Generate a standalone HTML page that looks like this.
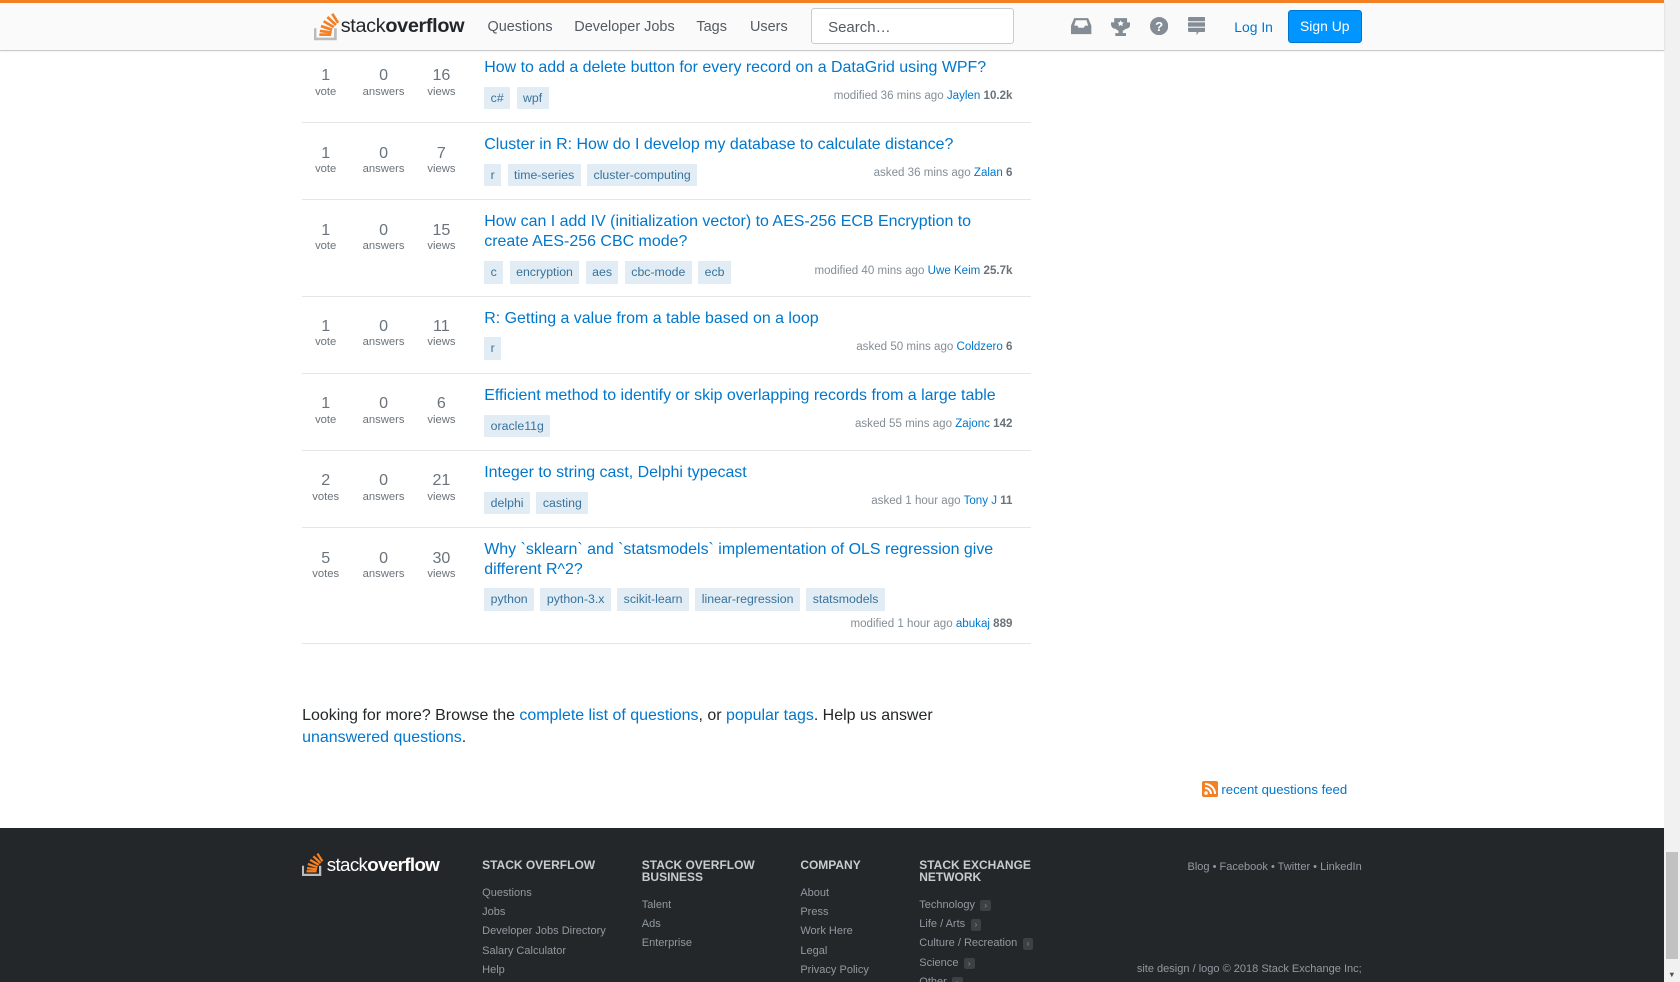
<!DOCTYPE html>
<html><head><meta charset="utf-8">
<style>
*{box-sizing:border-box;margin:0;padding:0}
html,body{width:1680px;height:982px;overflow:hidden;background:#fff}
#w{zoom:1.0714;width:1568px;height:917px;position:relative;overflow:hidden;font-family:Arial,"Liberation Sans",sans-serif;color:#242729}
a{color:#0077cc;text-decoration:none}
.hdr{position:absolute;left:0;top:0;width:1553px;height:47px;background:#fafafb;border-top:3px solid #f48024;box-shadow:0 1px 2px rgba(12,13,14,.15),0 1px 0 #ddd;z-index:5}
.nav{position:absolute;top:15px;font-size:13.5px;color:#535a60}
.search{position:absolute;left:757px;top:5px;width:189px;height:33px;border:1px solid #c8ccd0;border-radius:3px;background:#fff;font-size:14px;color:#535a60;padding:9px 15px}
.ic{position:absolute;top:13px}
.login{position:absolute;left:1152px;top:15px;font-size:13px;color:#0077cc}
.signup{position:absolute;left:1202px;top:7px;width:69px;height:30px;background:#0095ff;border:1px solid #07c;border-radius:3px;color:#fff;font-size:13px;text-align:center;line-height:28px}
.q{position:absolute;left:282px;width:680px;border-bottom:1px solid #e4e6e8}
.st{position:absolute;top:0;width:56px;text-align:center;color:#6a737c}
.st b{display:block;font-weight:normal;font-size:15px;line-height:18px}
.st i{display:block;font-style:normal;font-size:10.5px;line-height:13px}
.t{position:absolute;left:170px;width:490px;font-size:14.9px;line-height:19px;color:#0077cc}
.tags{position:absolute;left:170px;font-size:0}
.tag{display:inline-block;background:#e1ecf4;color:#39739d;font-size:11.5px;height:21px;line-height:21px;padding:0 6px;margin-right:6px}
.meta{position:absolute;right:17px;font-size:10.8px;color:#848d95;white-space:nowrap}
.meta b{color:#6a737c}
.sb{position:absolute;left:1553px;top:0;width:15px;height:917px;background:#f1f1f1}
.ft{position:absolute;left:0;top:773px;width:1553px;height:144px;background:#242729}
.fh{position:absolute;top:30px;font-size:11.2px;font-weight:bold;color:#c8ccd0;line-height:11px}
.fl{position:absolute;font-size:10.3px;color:#9199a1;line-height:18px}
.ch{display:inline-block;background:#3c4146;color:#848d95;font-size:8px;width:10px;height:11px;line-height:11px;text-align:center;margin-left:5px;border-radius:2px}
</style></head><body><div id="w">

<div class="q" style="top:47px;height:68px">
 <div class="st" style="left:-6px;top:15px"><b>1</b><i>vote</i></div>
 <div class="st" style="left:48px;top:15px"><b>0</b><i>answers</i></div>
 <div class="st" style="left:102px;top:15px"><b>16</b><i>views</i></div>
 <a class="t" style="top:7px">How to add a delete button for every record on a DataGrid using WPF?</a>
 <div class="tags" style="top:34px"><span class="tag">c#</span><span class="tag">wpf</span></div>
 <div class="meta" style="top:37px">modified 36 mins ago <a>Jaylen</a> <b>10.2k</b></div>
</div>
<div class="q" style="top:115px;height:72px">
 <div class="st" style="left:-6px;top:19px"><b>1</b><i>vote</i></div>
 <div class="st" style="left:48px;top:19px"><b>0</b><i>answers</i></div>
 <div class="st" style="left:102px;top:19px"><b>7</b><i>views</i></div>
 <a class="t" style="top:11px">Cluster in R: How do I develop my database to calculate distance?</a>
 <div class="tags" style="top:38px"><span class="tag">r</span><span class="tag">time-series</span><span class="tag">cluster-computing</span></div>
 <div class="meta" style="top:41px">asked 36 mins ago <a>Zalan</a> <b>6</b></div>
</div>
<div class="q" style="top:187px;height:90px">
 <div class="st" style="left:-6px;top:19px"><b>1</b><i>vote</i></div>
 <div class="st" style="left:48px;top:19px"><b>0</b><i>answers</i></div>
 <div class="st" style="left:102px;top:19px"><b>15</b><i>views</i></div>
 <a class="t" style="top:11px;width:480px">How can I add IV (initialization vector) to AES-256 ECB Encryption to create AES-256 CBC mode?</a>
 <div class="tags" style="top:57px"><span class="tag">c</span><span class="tag">encryption</span><span class="tag">aes</span><span class="tag">cbc-mode</span><span class="tag">ecb</span></div>
 <div class="meta" style="top:60px">modified 40 mins ago <a>Uwe Keim</a> <b>25.7k</b></div>
</div>
<div class="q" style="top:277px;height:72px">
 <div class="st" style="left:-6px;top:19px"><b>1</b><i>vote</i></div>
 <div class="st" style="left:48px;top:19px"><b>0</b><i>answers</i></div>
 <div class="st" style="left:102px;top:19px"><b>11</b><i>views</i></div>
 <a class="t" style="top:11px">R: Getting a value from a table based on a loop</a>
 <div class="tags" style="top:38px"><span class="tag">r</span></div>
 <div class="meta" style="top:41px">asked 50 mins ago <a>Coldzero</a> <b>6</b></div>
</div>
<div class="q" style="top:349px;height:72px">
 <div class="st" style="left:-6px;top:19px"><b>1</b><i>vote</i></div>
 <div class="st" style="left:48px;top:19px"><b>0</b><i>answers</i></div>
 <div class="st" style="left:102px;top:19px"><b>6</b><i>views</i></div>
 <a class="t" style="top:11px">Efficient method to identify or skip overlapping records from a large table</a>
 <div class="tags" style="top:38px"><span class="tag">oracle11g</span></div>
 <div class="meta" style="top:41px">asked 55 mins ago <a>Zajonc</a> <b>142</b></div>
</div>
<div class="q" style="top:421px;height:72px">
 <div class="st" style="left:-6px;top:19px"><b>2</b><i>votes</i></div>
 <div class="st" style="left:48px;top:19px"><b>0</b><i>answers</i></div>
 <div class="st" style="left:102px;top:19px"><b>21</b><i>views</i></div>
 <a class="t" style="top:11px">Integer to string cast, Delphi typecast</a>
 <div class="tags" style="top:38px"><span class="tag">delphi</span><span class="tag">casting</span></div>
 <div class="meta" style="top:41px">asked 1 hour ago <a>Tony J</a> <b>11</b></div>
</div>
<div class="q" style="top:493px;height:108px">
 <div class="st" style="left:-6px;top:19px"><b>5</b><i>votes</i></div>
 <div class="st" style="left:48px;top:19px"><b>0</b><i>answers</i></div>
 <div class="st" style="left:102px;top:19px"><b>30</b><i>views</i></div>
 <a class="t" style="top:11px;width:500px">Why `sklearn` and `statsmodels` implementation of OLS regression give different R^2?</a>
 <div class="tags" style="top:56px"><span class="tag">python</span><span class="tag">python-3.x</span><span class="tag">scikit-learn</span><span class="tag">linear-regression</span><span class="tag">statsmodels</span></div>
 <div class="meta" style="top:84px">modified 1 hour ago <a>abukaj</a> <b>889</b></div>
</div>

<div style="position:absolute;left:282px;top:658px;width:620px;font-size:14.9px;line-height:21px;color:#242729">Looking for more? Browse the <a>complete list of questions</a>, or <a>popular tags</a>. Help us answer <a>unanswered questions</a>.</div>

<div style="position:absolute;left:1122px;top:729px;font-size:12.3px;color:#0077cc">
<svg width="15" height="15" viewBox="0 0 16 16" style="vertical-align:-3px;margin-right:3px"><rect width="16" height="16" rx="2" fill="#f48024"/><circle cx="4" cy="12" r="1.8" fill="#fff"/><path d="M3 7a6 6 0 0 1 6 6M3 3a10 10 0 0 1 10 10" stroke="#fff" stroke-width="2" fill="none"/></svg>recent questions feed</div>

<div class="hdr">
 <svg style="position:absolute;left:293px;top:7px" width="26" height="30" viewBox="0 0 26 30"><path d="M1 17v10h19V17" stroke="#bcbbbb" stroke-width="2.5" fill="none"/><g stroke="#f48024" stroke-width="2.5"><path d="M5 23h11"/><path d="M5.5 19.5l11 1.5"/><path d="M6.5 15l10.5 3.5"/><path d="M9 10.5l9.5 5.5"/><path d="M12.5 6.5l8 7.5"/><path d="M17 3.5l5.5 8.5"/></g></svg>
 <div style="position:absolute;left:318px;top:11px;font-size:18.5px;color:#242729;letter-spacing:-0.3px">stack<b>overflow</b></div>
 <div class="nav" style="left:455px">Questions</div>
 <div class="nav" style="left:536px">Developer Jobs</div>
 <div class="nav" style="left:650px">Tags</div>
 <div class="nav" style="left:700px">Users</div>
 <div class="search">Search…</div>
 <svg class="ic" style="left:1000px" width="19" height="17" viewBox="0 0 19 17"><path d="M3 1h13l3 7v8H0V8z" fill="#848d95"/><path d="M3 8h3l1 2h5l1-2h3L14.5 3h-10z" fill="#fafafb"/></svg>
 <svg class="ic" style="left:1037px" width="18" height="18" viewBox="0 0 18 18"><path d="M3 1h12v4h3v2a4 4 0 0 1-4 4l-3 2v2h3v3H4v-3h3v-2l-3-2a4 4 0 0 1-4-4V5h3z" fill="#848d95"/><path d="M9 3l1 2h2l-1.5 1.5.5 2-2-1-2 1 .5-2L6 5h2z" fill="#fff"/></svg>
 <svg class="ic" style="left:1073px" width="17" height="17" viewBox="0 0 18 18"><circle cx="9" cy="9" r="9" fill="#848d95"/><text x="9" y="14" font-size="13" font-weight="bold" text-anchor="middle" fill="#fff" font-family="Arial">?</text></svg>
 <svg class="ic" style="left:1109px" width="16" height="19" viewBox="0 0 16 19"><rect y="0" width="16" height="4" rx="1" fill="#848d95"/><rect y="5" width="16" height="4" fill="#848d95"/><path d="M0 10h16v3a1 1 0 0 1-1 1H10l-2 3v-3H1a1 1 0 0 1-1-1z" fill="#848d95"/></svg>
 <div class="login">Log In</div>
 <div class="signup">Sign Up</div>
</div>

<div class="ft">
 <svg style="position:absolute;left:282px;top:19px" width="22" height="28" viewBox="0 0 26 30"><path d="M1 17v10h19V17" stroke="#bcbbbb" stroke-width="2.5" fill="none"/><g stroke="#f48024" stroke-width="2.5"><path d="M5 23h11"/><path d="M5.5 19.5l11 1.5"/><path d="M6.5 15l10.5 3.5"/><path d="M9 10.5l9.5 5.5"/><path d="M12.5 6.5l8 7.5"/><path d="M17 3.5l5.5 8.5"/></g></svg>
 <div style="position:absolute;left:305px;top:24px;font-size:17.5px;color:#fff;letter-spacing:-0.6px">stack<b>overflow</b></div>
 <div class="fh" style="left:450px">STACK OVERFLOW</div>
 <div class="fl" style="left:450px;top:52px">Questions<br>Jobs<br>Developer Jobs Directory<br>Salary Calculator<br>Help</div>
 <div class="fh" style="left:599px">STACK OVERFLOW<br>BUSINESS</div>
 <div class="fl" style="left:599px;top:63px">Talent<br>Ads<br>Enterprise</div>
 <div class="fh" style="left:747px">COMPANY</div>
 <div class="fl" style="left:747px;top:52px">About<br>Press<br>Work Here<br>Legal<br>Privacy Policy</div>
 <div class="fh" style="left:858px">STACK EXCHANGE<br>NETWORK</div>
 <div class="fl" style="left:858px;top:63px">Technology<span class="ch">›</span><br>Life / Arts<span class="ch">›</span><br>Culture / Recreation<span class="ch">›</span><br>Science<span class="ch">›</span><br>Other<span class="ch">›</span></div>
 <div class="fl" style="right:282px;top:28px">Blog • Facebook • Twitter • LinkedIn</div>
 <div class="fl" style="right:282px;top:123px;white-space:nowrap">site design / logo © 2018 Stack Exchange Inc;<br>user contributions licensed under cc by-sa 3.0</div>
</div>

<div class="sb"><div style="position:absolute;left:2px;top:795px;width:11px;height:100px;background:#c1c1c1"></div><div style="position:absolute;left:4px;top:905px;font-size:7px;color:#505050">▼</div></div>
</div></body></html>
